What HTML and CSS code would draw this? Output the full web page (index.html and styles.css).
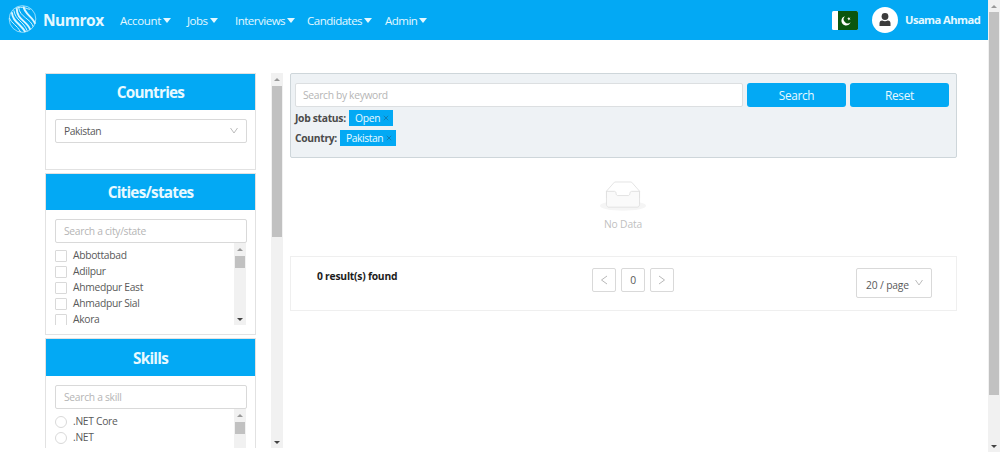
FILE: index.html
```html
<!DOCTYPE html>
<html lang="en">
<head>
<meta charset="utf-8">
<title>Numrox</title>
<link rel="stylesheet" href="styles.css">
</head>
<body>
<div class="window">
  <div class="page">
    <header class="nav">
      <svg class="logo" viewBox="0 0 30 30" fill="none" stroke="#d9f5ff">
        <circle cx="15" cy="15" r="13.8" stroke-width=".7"/>
        <path stroke-width="2" d="M4 8C5 18 12 19 18 28.500M9 4C9 16 20 17 23 26M16 2C17 10 26 13 28 20"/>
        <path stroke-width="1" d="M1.500 14C4 20 9 21 13 28.500M6 6C8 17 16 17 20 27.500M11 3C12 13 24 15 26 23M8 4C15 1 20 5 23 5"/>
      </svg>
      <span class="brand">Numrox</span>
      <nav class="menu">
        <a class="m1">Account<i></i></a>
        <a class="m2">Jobs<i></i></a>
        <a class="m3">Interviews<i></i></a>
        <a class="m4">Candidates<i></i></a>
        <a class="m5">Admin<i></i></a>
      </nav>
      <svg class="flag" viewBox="0 0 26 19">
        <rect width="26" height="19" rx="1.500" fill="#fff"/>
        <path d="M6 0H24.500A1.500 1.500 0 0 1 26 1.500V17.500A1.500 1.500 0 0 1 24.500 19H6Z" fill="#0b560f"/>
        <path d="M13 5.200A4.700 4.700 0 1 0 18.600 11.200A4.100 4.100 0 1 1 13 5.200Z" fill="#fff"/>
        <path d="M16.300 6l.8 1 1.300-.4-.7 1.200.8 1-1.300-.3-.8 1.100-.1-1.400-1.200-.5 1.200-.5z" fill="#fff"/>
      </svg>
      <span class="avatar"><svg viewBox="0 0 12 14" fill="#3c3c3c"><circle cx="6" cy="3.500" r="3.400"/><path d="M.5 13V10.500Q.5 7.600 3.200 7.600Q6 9 8.800 7.600Q11.500 7.600 11.500 10.500V13Z"/></svg></span>
      <span class="user">Usama Ahmad</span>
    </header>

    <div class="columns">
      <aside class="sidebar">
        <div class="cards">
          <section class="card countries">
            <h2>Countries</h2>
            <div class="field select"><span class="tight">Pakistan</span>
              <svg class="chev" viewBox="0 0 10 8"><path d="M1.500 1L5 6L8.500 1"/></svg></div>
          </section>
          <section class="card cities">
            <h2>Cities/states</h2>
            <div class="field hint"><span>Search a city/state</span></div>
            <div class="list">
              <div class="options">
                <label><b class="box"></b><span>Abbottabad</span></label>
                <label><b class="box"></b><span>Adilpur</span></label>
                <label><b class="box"></b><span>Ahmedpur East</span></label>
                <label><b class="box"></b><span>Ahmadpur Sial</span></label>
                <label><b class="box"></b><span>Akora</span></label>
              </div>
              <div class="bar"><i class="up"></i><i class="thumb"></i><i class="down"></i></div>
            </div>
          </section>
          <section class="card skills">
            <h2>Skills</h2>
            <div class="field hint"><span>Search a skill</span></div>
            <div class="list">
              <div class="options">
                <label><b class="box round"></b><span>.NET Core</span></label>
                <label><b class="box round"></b><span>.NET</span></label>
                <label><b class="box round"></b></label>
              </div>
              <div class="bar"><i class="up"></i><i class="thumb"></i></div>
            </div>
          </section>
        </div>
        <div class="bar side-bar"><i class="up"></i><i class="thumb"></i><i class="down"></i></div>
      </aside>

      <main class="main">
        <section class="search">
          <div class="row">
            <div class="keyword"><span>Search by keyword</span></div>
            <button>Search</button>
            <button>Reset</button>
          </div>
          <div class="filter"><strong class="f1">Job status:</strong><span class="tag open"><span>Open</span><svg viewBox="0 0 6 6"><path d="M.8.8l4.400 4.400M5.200.8L.8 5.200"/></svg></span></div>
          <div class="filter"><strong class="f2">Country:</strong><span class="tag pk"><span class="tight">Pakistan</span><svg viewBox="0 0 6 6"><path d="M.8.8l4.400 4.400M5.200.8L.8 5.200"/></svg></span></div>
        </section>
        <section class="empty">
          <svg viewBox="0 0 64 41" fill="none">
            <g transform="translate(0 1)" fill-rule="evenodd">
              <ellipse fill="#f5f5f5" cx="32" cy="33" rx="32" ry="7"/>
              <g stroke="#d9d9d9">
                <path fill="#fff" d="M55 12.760L44.854 1.258C44.367.474 43.656 0 42.907 0H21.093c-.749 0-1.460.474-1.947 1.257L9 12.761V22h46v-9.240z"/>
                <path fill="#fafafa" d="M41.613 15.931c0-1.605.994-2.930 2.227-2.931H55v18.137C55 33.260 53.680 35 52.050 35h-40.100C10.320 35 9 33.259 9 31.137V13h11.160c1.233 0 2.227 1.323 2.227 2.928v.022c0 1.605 1.005 2.901 2.237 2.901h14.752c1.232 0 2.237-1.308 2.237-2.913v-.007z"/>
              </g>
            </g>
          </svg>
          <span class="no-data">No Data</span>
        </section>
        <section class="pager">
          <strong>0 result(s) found</strong>
          <div class="pages">
            <span class="pg"><svg viewBox="0 0 8 10"><path d="M7 1L1.500 5L7 9"/></svg></span>
            <span class="pg">0</span>
            <span class="pg"><svg viewBox="0 0 8 10"><path d="M1 1L6.500 5L1 9"/></svg></span>
          </div>
          <div class="size"><span>20 / page</span><svg class="chev" viewBox="0 0 10 8"><path d="M1.500 1L5 6L8.500 1"/></svg></div>
        </section>
      </main>
    </div>
  </div>
  <div class="bar page-bar"><i class="up"></i><i class="thumb"></i><i class="down"></i></div>
</div>
</body>
</html>
```
FILE: styles.css
```css
* { box-sizing: border-box; }
body { margin: 0; background: #fff; font-family: "Open Sans", "Noto Sans", sans-serif; font-size: 10.3px; letter-spacing: -.3px; color: #595959; }
span, strong, a { white-space: nowrap; }
.tight { letter-spacing: -.42px; }
.window { display: flex; width: 1000px; height: 452px; overflow: hidden; }
.page { width: 988px; }

.nav { display: flex; align-items: center; height: 40px; background: #03a9f4; color: #e4f8ff; padding-left: 8px; }
.logo { width: 29px; height: 30px; margin-top: -3px; flex: none; }
.brand { font-size: 15.500px; font-weight: 700; width: 77px; margin-left: 6px; letter-spacing: -.5px; flex: none; }
.menu { display: flex; width: 712px; flex: none; font-size: 11.5px; letter-spacing: -.5px; }
.menu a { display: flex; align-items: center; flex: none; }
.menu i { border: 4px solid transparent; border-top: 5px solid #e4f8ff; border-bottom: 0; margin-left: 2px; }
.m1 { width: 67px; letter-spacing: -.35px; }
.m2 { width: 48px; }
.m3 { width: 72px; }
.m4 { width: 78px; }
.flag { width: 26px; height: 19px; flex: none; }
.avatar { display: flex; align-items: center; justify-content: center; width: 26px; height: 26px; border-radius: 50%; background: #fff; margin-left: 14px; flex: none; }
.avatar svg { width: 12px; height: 14px; }
.user { font-size: 11.200px; font-weight: 700; margin: -2px 0 0 7px; letter-spacing: -.55px; }

.columns { display: flex; padding: 33px 0 0 45px; }
.sidebar { display: flex; justify-content: space-between; width: 238px; height: 375px; overflow: hidden; }
.cards { width: 211px; }
.card { border: 1px solid #e2e2e2; display: flow-root; }
.card h2 { display: flex; align-items: center; justify-content: center; height: 36px; margin: 0; background: #03a9f4; color: #e8f9ff; font-size: 15.300px; font-weight: 700; letter-spacing: -.75px; }
.countries { height: 97px; margin-bottom: 3px; }
.cities { height: 162px; margin-bottom: 3px; }
.skills { height: 161px; }
.card.skills h2 { height: 37px; }
.field { display: flex; align-items: center; justify-content: space-between; height: 24px; margin: 9px 8px 0 9px; padding: 0 7px 0 8px; border: 1px solid #d9d9d9; border-radius: 2px; background: #fff; }
.hint, .keyword { color: #b5b5b5; }
.chev { width: 10px; height: 8px; fill: none; stroke: #bcbcbc; stroke-width: 1; }
.list { display: flex; justify-content: space-between; height: 82px; margin: 0 9px; overflow: hidden; }
.options { padding-top: 4px; }
.options label { display: flex; align-items: center; gap: 6px; height: 16px; }
.box { width: 12px; height: 12px; border: 1px solid #d9d9d9; border-radius: 1px; flex: none; margin-top: 1px; }
.round { border-radius: 50%; }

.bar { display: flex; flex-direction: column; align-items: center; width: 12px; background: #f1f1f1; flex: none; padding: 5px 0 4px; }
.up { border: 3px solid transparent; border-bottom: 3px solid #999; border-top: 0; }
.down { border: 3px solid transparent; border-top: 3px solid #444; border-bottom: 0; margin-top: auto; }
.thumb { width: 10px; background: #c1c1c1; margin-top: 4px; height: 12px; }
.list .thumb { margin-top: 5px; }
.side-bar .thumb { height: 151px; margin-top: 5px; }
.page-bar .thumb { height: 383px; }

.main { width: 667px; margin-left: 7px; }
.search { height: 85px; padding: 9px 7px 0 4px; background: #eef2f5; border: 1px solid #ced6da; border-radius: 2px; }
.row { display: flex; margin-bottom: 2px; }
.keyword { display: flex; align-items: center; width: 448px; height: 24px; padding-left: 7px; background: #fff; border: 1px solid #dcdfe1; border-radius: 2px; letter-spacing: -.33px; }
.row button { width: 99px; height: 24px; margin-left: 4px; padding: 0; border: 0; border-radius: 3px; background: #03a9f4; color: #e8f9ff; font: 11.8px "Open Sans", sans-serif; letter-spacing: -.3px; }
.filter { display: flex; align-items: center; height: 17px; margin-bottom: 3px; color: #4b4b4b; }
.tag { display: flex; align-items: center; justify-content: space-between; height: 16px; background: #03a9f4; color: #e8f9ff; padding: 0 4px 0 6px; }
.tag svg { width: 6px; height: 6px; stroke: #147aac; stroke-width: .9; flex: none; }
.open { width: 44px; }
.pk { width: 56px; }
.f1 { width: 54px; }
.f2 { width: 45px; }

.empty { display: flex; flex-direction: column; align-items: center; height: 98px; padding: 23px 1px 0 0; color: #bfbfbf; }
.empty svg { width: 46px; height: 30px; margin-bottom: 6px; }
.no-data { letter-spacing: -.15px; }
.pager { display: flex; height: 55px; border: 1px solid #efefef; padding: 11px 0 0 26px; }
.pager strong { width: 275px; color: #1c1c1c; margin-top: 1px; letter-spacing: -.22px; }
.pages { display: flex; gap: 5px; width: 264px; }
.pg { display: flex; align-items: center; justify-content: center; width: 24px; height: 24px; border: 1px solid #d9d9d9; border-radius: 2px; }
.pg svg { width: 8px; height: 10px; fill: none; stroke: #b8b8b8; }
.size { display: flex; justify-content: space-between; width: 76px; height: 30px; padding: 9px 7px 0 9px; border: 1px solid #d9d9d9; border-radius: 2px; line-height: 15px; letter-spacing: -.15px; }
.size .chev { margin-top: 1px; }
```
